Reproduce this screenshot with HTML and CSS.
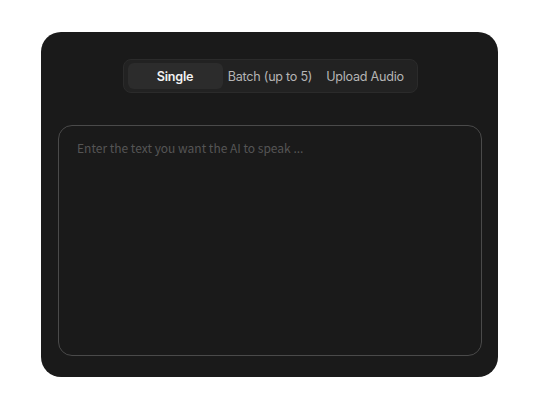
FILE: index.html
```html
<!DOCTYPE html>
<html lang="en">
<head>
<meta charset="utf-8">
<link rel="stylesheet" href="styles.css">
</head>
<body>
<div class="page">
  <div class="card">
    <div class="tabs">
      <div class="tab active">Single</div>
      <div class="tab">Batch (up to 5)</div>
      <div class="tab">Upload Audio</div>
    </div>
    <textarea class="input" placeholder="Enter the text you want the AI to speak ..."></textarea>
  </div>
</div>
</body>
</html>
```
FILE: styles.css
```css
html, body {
  margin: 0;
  padding: 0;
  background: #ffffff;
}
.page {
  width: 539px;
  height: 409px;
  padding: 32px 41px 0 41px;
  box-sizing: border-box;
}
.card {
  width: 457px;
  height: 345px;
  box-sizing: border-box;
  background: #1a1a1a;
  border-radius: 20px;
  padding: 27px 16px 20px 17px;
  display: flex;
  flex-direction: column;
  align-items: center;
  gap: 32px;
}
.tabs {
  width: 295px;
  height: 34px;
  box-sizing: border-box;
  background: #222222;
  border: 1px solid #2b2b2b;
  border-radius: 8px;
  padding: 3px 4px;
  display: grid;
  grid-template-columns: 1fr 1fr 1fr;
  font-family: Inter, "Liberation Sans", sans-serif;
  font-size: 12.6px;
  letter-spacing: -0.25px;
}
.tab {
  display: flex;
  align-items: center;
  justify-content: center;
  color: #b5b5b5;
  border-radius: 6px;
  white-space: nowrap;
}
.tab.active {
  background: #2c2c2c;
  color: #f2f2f2;
  font-weight: 600;
}
.input {
  width: 424px;
  height: 231px;
  box-sizing: border-box;
  background: #1a1a1a;
  border: 1px solid #4a4a4a;
  border-radius: 14px;
  padding: 13px 18px;
  resize: none;
  outline: none;
  color: #ddd;
  font-family: "Noto Sans CJK SC", "Noto Sans", sans-serif;
  font-size: 12px;
  margin: 0;
  align-self: flex-start;
}
.input::placeholder {
  color: #555555;
}
```
